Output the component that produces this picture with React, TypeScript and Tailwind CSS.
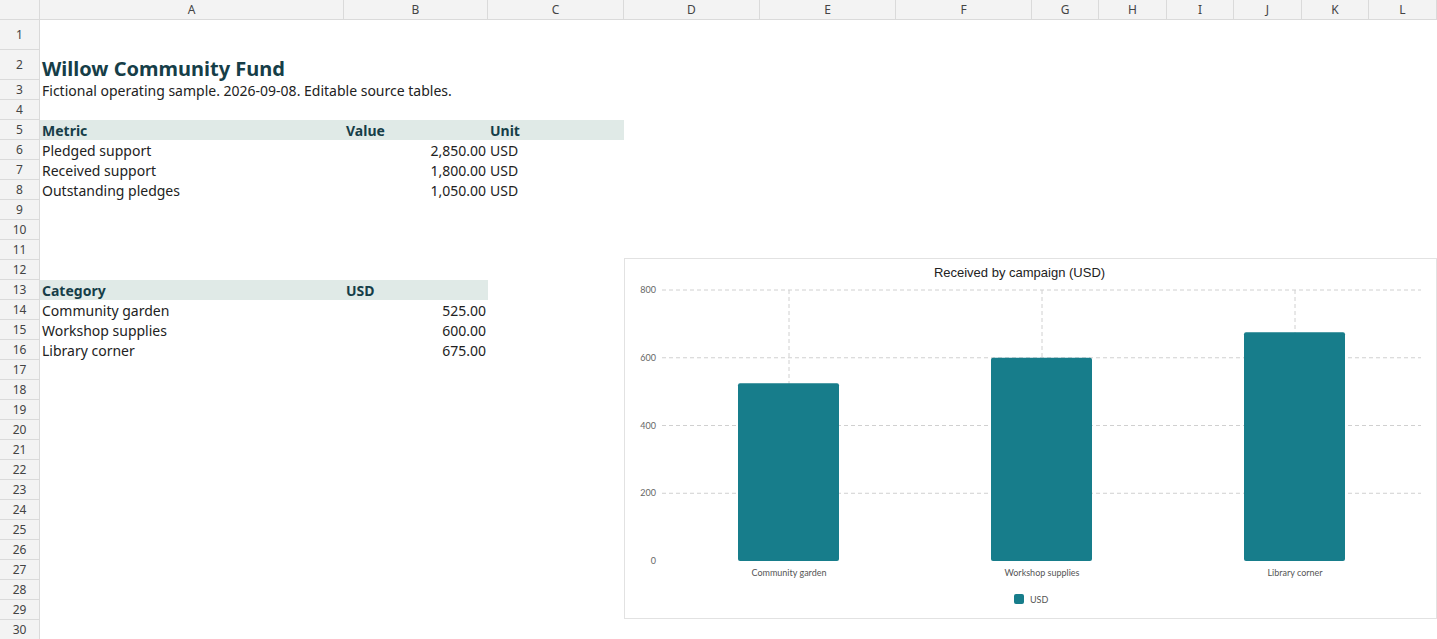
import React from 'react';

const cols = [
  { n: 'A', w: 'w-[304px]' }, { n: 'B', w: 'w-[144px]' }, { n: 'C', w: 'w-[136px]' }, { n: 'D', w: 'w-[136px]' },
  { n: 'E', w: 'w-[136px]' }, { n: 'F', w: 'w-[136px]' }, { n: 'G', w: 'w-[67px]' }, { n: 'H', w: 'w-[68px]' },
  { n: 'I', w: 'w-[67px]' }, { n: 'J', w: 'w-[68px]' }, { n: 'K', w: 'w-[67px]' }, { n: 'L', w: 'w-[68px]' },
];

type Cell = { text: string; align?: 'right'; cls?: string };
const head = 'font-bold text-[#163e48]';
const cells: Record<number, Record<number, Cell>> = {
  2: { 0: { text: 'Willow Community Fund', cls: 'text-[20px] font-bold text-[#163e48]' } },
  3: { 0: { text: 'Fictional operating sample. 2026-09-08. Editable source tables.' } },
  5: { 0: { text: 'Metric', cls: head }, 1: { text: 'Value', cls: head }, 2: { text: 'Unit', cls: head } },
  6: { 0: { text: 'Pledged support' }, 1: { text: '2,850.00', align: 'right' }, 2: { text: 'USD' } },
  7: { 0: { text: 'Received support' }, 1: { text: '1,800.00', align: 'right' }, 2: { text: 'USD' } },
  8: { 0: { text: 'Outstanding pledges' }, 1: { text: '1,050.00', align: 'right' }, 2: { text: 'USD' } },
  13: { 0: { text: 'Category', cls: head }, 1: { text: 'USD', cls: head } },
  14: { 0: { text: 'Community garden' }, 1: { text: '525.00', align: 'right' } },
  15: { 0: { text: 'Workshop supplies' }, 1: { text: '600.00', align: 'right' } },
  16: { 0: { text: 'Library corner' }, 1: { text: '675.00', align: 'right' } },
};
const shaded: Record<number, number> = { 5: 3, 13: 2 };

function Chart() {
  const W = 813, H = 361;
  const x0 = 37, x1 = 796, yTop = 31, yBot = 302;
  const y = (v: number) => yBot - (v / 800) * (yBot - yTop);
  const bars = [
    { l: 'Community garden', v: 525, c: 164 },
    { l: 'Workshop supplies', v: 600, c: 417 },
    { l: 'Library corner', v: 675, c: 670 },
  ];
  return (
    <div className="absolute left-[624px] top-[258px] w-[813px] h-[361px] bg-white border border-[#e2e2e2]">
      <svg width={W} height={H} fontFamily="Lato, sans-serif">
        <text x={W / 2 - 12} y={18} textAnchor="middle" fontSize="13" fill="#222" fontFamily="'Liberation Sans', Arial, sans-serif">Received by campaign (USD)</text>
        {[800, 600, 400, 200].map((v) => (
          <line key={v} x1={x0} x2={x1} y1={y(v)} y2={y(v)} stroke="#d0d0d0" strokeDasharray="4 3" />
        ))}
        {bars.map((b) => (
          <line key={b.l} x1={b.c} x2={b.c} y1={yTop} y2={yBot} stroke="#d0d0d0" strokeDasharray="4 3" />
        ))}
        {[800, 600, 400, 200, 0].map((v) => (
          <text key={v} x={31} y={y(v) + 3} textAnchor="end" fontSize="9" fill="#666">{v}</text>
        ))}
        {bars.map((b) => (
          <g key={b.l + 'b'}>
            <rect x={b.c - 51} y={y(b.v)} width={101} height={yBot - y(b.v)} rx={2} fill="#177d8b" />
            <text x={b.c} y={yBot + 15} textAnchor="middle" fontSize="9" fill="#555">{b.l}</text>
          </g>
        ))}
        <rect x={389} y={335} width={10} height={10} rx={2} fill="#177d8b" />
        <text x={405} y={344} fontSize="9" fill="#555">USD</text>
      </svg>
    </div>
  );
}

export default function App() {
  const rows = Array.from({ length: 30 }, (_, i) => i + 1);
  return (
    <div className="relative w-[1437px] h-[639px] overflow-hidden bg-white text-[14px] text-[#222] font-['Liberation_Sans',Arial,sans-serif]">
      <div className="flex h-[20px] bg-[#f3f3f3] border-b border-[#dadada]">
        <div className="w-[40px] shrink-0 border-r border-[#dadada]" />
        {cols.map((c) => (
          <div key={c.n} className={`${c.w} shrink-0 border-r border-[#dadada] flex items-center justify-center text-[12px] text-[#444]`}>{c.n}</div>
        ))}
      </div>
      {rows.map((r) => (
        <div key={r} className={`flex ${r <= 2 ? 'h-[30px]' : 'h-[20px]'}`}>
          <div className="w-[40px] shrink-0 bg-[#f3f3f3] border-r border-b border-[#dadada] flex items-center justify-center text-[12px] text-[#444]">{r}</div>
          {cols.map((c, ci) => {
            const cell = cells[r]?.[ci];
            const bg = shaded[r] !== undefined && ci < shaded[r];
            return (
              <div key={c.n} className={`${c.w} shrink-0 flex items-end px-[2px] whitespace-nowrap overflow-visible leading-[18px] ${bg ? 'bg-[#e0eae7]' : ''} ${cell?.align === 'right' ? 'justify-end' : ''} ${r === 2 ? 'pb-[2px]' : ''}`}>
                {cell && <span className={cell.cls ?? ''}>{cell.text}</span>}
              </div>
            );
          })}
        </div>
      ))}
      <Chart />
    </div>
  );
}
